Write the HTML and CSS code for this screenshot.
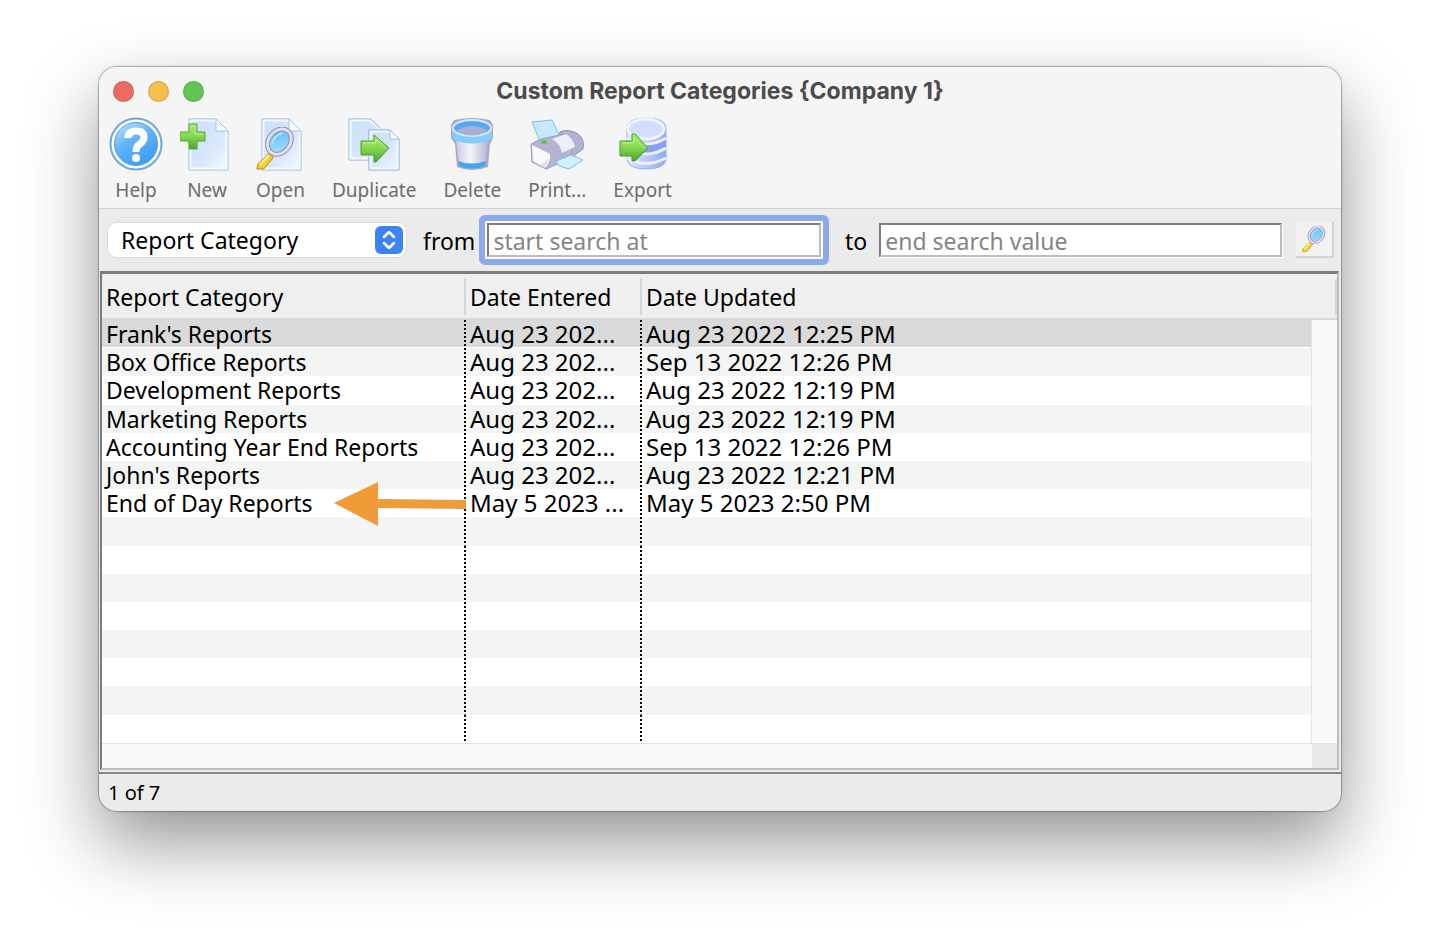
FILE: index.html
```
<!DOCTYPE html>
<html lang="en">
<head>
<meta charset="utf-8">
<title>Custom Report Categories {Company 1}</title>
<link rel="stylesheet" href="styles.css">
</head>
<body>
<svg class="defs" width="0" height="0" aria-hidden="true">
  <defs>
    <linearGradient id="sheet" x1="0" y1="0" x2="1" y2="1"><stop offset="0" stop-color="#c9dff8"/><stop offset=".55" stop-color="#d6e6fb"/><stop offset="1" stop-color="#f4f8ff"/></linearGradient>
    <linearGradient id="green" x1="0" y1="0" x2="0" y2="1"><stop offset="0" stop-color="#a6ee6c"/><stop offset=".5" stop-color="#84d850"/><stop offset="1" stop-color="#4fa52c"/></linearGradient>
    <linearGradient id="lens" x1="0" y1="0" x2="1" y2="1"><stop offset="0" stop-color="#5fb4f6"/><stop offset="1" stop-color="#a9e6ff"/></linearGradient>
    <linearGradient id="ball" x1="0" y1="0" x2=".6" y2="1"><stop offset="0" stop-color="#c4e6fc"/><stop offset=".5" stop-color="#62b2f8"/><stop offset="1" stop-color="#3f9df8"/></linearGradient>
    <linearGradient id="metal" x1="0" y1="0" x2="1" y2="0"><stop offset="0" stop-color="#c9cae2"/><stop offset=".45" stop-color="#f5f5fc"/><stop offset="1" stop-color="#b3b4d2"/></linearGradient>
    <linearGradient id="drum" x1="0" y1="0" x2="1" y2="0"><stop offset="0" stop-color="#dfe6ff"/><stop offset=".5" stop-color="#b9c9ff"/><stop offset="1" stop-color="#8ea6f8"/></linearGradient>
    <symbol id="glass" viewBox="0 0 40 44">
      <path d="M13 27L2 38L1 43H8L18 31Z" fill="#f8cc2c" stroke="#b98322" stroke-width="1"/>
      <path d="M13 29L4 39" stroke="#ffe878" stroke-width="3"/>
      <ellipse cx="24" cy="15" rx="11" ry="14" transform="rotate(38 24 15)" fill="url(#lens)" stroke="#9391ad" stroke-width="5"/>
      <ellipse cx="24" cy="15" rx="11" ry="14" transform="rotate(38 24 15)" fill="none" stroke="#dedff0" stroke-width="3"/>
      <path d="M16 18Q18 9 27 6" fill="none" stroke="#b6e3fd" stroke-width="2"/>
    </symbol>
  </defs>
</svg>
<main class="window">
  <header class="titlebar">
    <div class="lights">
      <button class="light red" aria-label="Close"></button>
      <button class="light amber" aria-label="Minimize"></button>
      <button class="light green" aria-label="Zoom"></button>
    </div>
    <h1 class="title">Custom Report Categories {Company 1}</h1>
  </header>
  <nav class="toolbar">
    <button class="tool">
      <svg class="icon" viewBox="0 0 54 54"><circle cx="27" cy="27" r="25.500" fill="#fff" stroke="#6fa4e2" stroke-width="2"/><circle cx="27" cy="27" r="21.500" fill="url(#ball)" stroke="#4d9cee" stroke-width="1"/><path d="M19 21Q19 14 27 14Q35 14 35 20Q35 24 31 27Q27 29 27 35" fill="none" stroke="#fff" stroke-width="7"/><circle cx="27" cy="41" r="4" fill="#fff"/></svg>
      <span>Help</span>
    </button>
    <button class="tool">
      <svg class="icon" viewBox="0 0 54 54"><path d="M9 2H36L48 14V53H9Z" fill="url(#sheet)" stroke="#8dbbeb" stroke-width="1"/><path d="M10.500 3.500H35L46.500 15V51.500H10.500Z" fill="none" stroke="#f3f8ff" stroke-width="2"/><path d="M36 2V14H48Z" fill="#fff" stroke="#9ac4ee" stroke-width="1"/><path d="M9 7H17V15H25V24H17V32H9V24H0V15H9Z" fill="url(#green)" stroke="#5ba338" stroke-width="1"/><path d="M11 9H15V17H23" fill="none" stroke="#b6f08a" stroke-width="1"/></svg>
      <span>New</span>
    </button>
    <button class="tool">
      <svg class="icon" viewBox="0 0 54 54"><path d="M9 2H36L48 14V53H9Z" fill="url(#sheet)" stroke="#8dbbeb" stroke-width="1"/><path d="M10.500 3.500H35L46.500 15V51.500H10.500Z" fill="none" stroke="#f3f8ff" stroke-width="2"/><path d="M36 2V14H48Z" fill="#fff" stroke="#9ac4ee" stroke-width="1"/><use href="#glass" x="3" y="10" width="39" height="43"/></svg>
      <span>Open</span>
    </button>
    <button class="tool">
      <svg class="icon" viewBox="0 0 54 54"><path d="M2 2H24L33 11V43H2Z" fill="url(#sheet)" stroke="#7fb2ea" stroke-width="1"/><path d="M3.500 3.500H23L32 12V41.500H3.500Z" fill="none" stroke="#f3f8ff" stroke-width="2"/><path d="M22 13H43L52 22V53H22Z" fill="url(#sheet)" stroke="#6fa6e6" stroke-width="1"/><path d="M23.500 14.500H42L50.500 23V51.500H23.500Z" fill="none" stroke="#f3f8ff" stroke-width="2"/><path d="M43 13V22H52Z" fill="#fff" stroke="#8dbbeb" stroke-width="1"/><path d="M14 24H27V18L42 31L29 45H27V38H14Z" fill="url(#green)" stroke="#4f9c2d" stroke-width="1"/><path d="M16 26H29V22L38 31" fill="none" stroke="#b9f08e" stroke-width="1"/></svg>
      <span>Duplicate</span>
    </button>
    <button class="tool">
      <svg class="icon" viewBox="0 0 54 54"><path d="M9 3Q27-1 45 3L48 8V21L45 27L43 50Q27 56 12 50L10 27L6 21V8Z" fill="#a9aacb"/><path d="M11 22H43L41 48Q27 54 14 48Z" fill="url(#metal)"/><path d="M13 44Q27 49 41 44L40 49Q27 54 14 49Z" fill="#40a5f2"/><path d="M7 13Q27 21 47 13V22Q27 31 8 22Z" fill="#83cbfb"/><ellipse cx="27" cy="11" rx="19" ry="8" fill="#4faaf2" stroke="#d7eaff" stroke-width="2"/><path d="M11 14Q27 4 43 14Q27 23 11 14Z" fill="#aaaed0"/></svg>
      <span>Delete</span>
    </button>
    <button class="tool">
      <svg class="icon" viewBox="0 0 54 54"><path d="M30 15Q38 11 48 17Q55 22 53 32L42 40L22 37Z" fill="#b1b2d2" stroke="#8d8fb8" stroke-width="1"/><path d="M2 5L22 3L31 22L11 27Z" fill="#c9e9ff" stroke="#77bdf3" stroke-width="1"/><path d="M1 27L11 22L34 17L44 28L39 42L16 52L2 45Z" fill="#b3b3d3" stroke="#9c9dc2" stroke-width="1"/><path d="M22 22L36 17Q43 21 45 30L32 36Q30 26 22 22Z" fill="#eeeef7"/><path d="M2 28L20 37Q21 44 15 51L3 44Z" fill="#fafafe"/><path d="M20 37L15 51L10 48Q17 45 20 37Z" fill="#dcdcea"/><path d="M26 44L41 38L53 43L39 52L29 49Z" fill="#d0efff" stroke="#7dbbe9" stroke-width="1"/><ellipse cx="14" cy="25" rx="3" ry="2" fill="#5fc63b"/></svg>
      <span>Print...</span>
    </button>
    <button class="tool">
      <svg class="icon" viewBox="0 0 54 54"><path d="M11 12Q11 1 30 1Q50 1 50 12V43Q48 52 30 52Q13 52 11 43Z" fill="url(#drum)" stroke="#9eaef0" stroke-width="1"/><path d="M11 22Q30 34 50 22V32Q30 43 11 32Z" fill="#869ff8"/><path d="M11 21Q30 33 50 21M11 31Q30 43 50 31M11 41Q30 52 50 41" fill="none" stroke="#edf1ff" stroke-width="3"/><ellipse cx="30" cy="12" rx="18" ry="10" fill="#d2ddff" stroke="#f1f4ff" stroke-width="3"/><path d="M4 24H16V17H19L32 31L19 44H16V39H4Z" fill="url(#green)" stroke="#4c9b2a" stroke-width="1"/><path d="M6 26H18V21L28 31" fill="none" stroke="#b5ed8d" stroke-width="1"/></svg>
      <span>Export</span>
    </button>
  </nav>
  <form class="search">
    <div class="picker">
      <select class="select" aria-label="Search field"><option>Report Category</option></select>
      <svg class="stepper" viewBox="0 0 28 28"><rect width="28" height="28" rx="6" fill="#3b84f7"/><path d="M9 11L14 6L19 11M9 17L14 22L19 17" fill="none" stroke="#fff" stroke-width="2.500" stroke-linecap="round" stroke-linejoin="round"/></svg>
    </div>
    <label class="from" for="start">from</label>
    <div class="focus"><input class="field" id="start" type="text" placeholder="start search at"></div>
    <label class="to" for="end">to</label>
    <input class="field last" id="end" type="text" placeholder="end search value">
    <button class="go" type="button" aria-label="Search"><svg class="go-icon" viewBox="0 0 40 44"><use href="#glass"/></svg></button>
  </form>
  <section class="frame">
    <table class="list">
      <colgroup><col class="c1"><col class="c2"><col><col class="c4"></colgroup>
      <thead><tr><th>Report Category</th><th>Date Entered</th><th colspan="2">Date Updated</th></tr></thead>
      <tbody>
        <tr class="selected"><td>Frank's Reports</td><td>Aug 23 202...</td><td>Aug 23 2022 12:25 PM</td><td class="track" rowspan="15"></td></tr>
        <tr><td>Box Office Reports</td><td>Aug 23 202...</td><td>Sep 13 2022 12:26 PM</td></tr>
        <tr><td>Development Reports</td><td>Aug 23 202...</td><td>Aug 23 2022 12:19 PM</td></tr>
        <tr><td>Marketing Reports</td><td>Aug 23 202...</td><td>Aug 23 2022 12:19 PM</td></tr>
        <tr><td>Accounting Year End Reports</td><td>Aug 23 202...</td><td>Sep 13 2022 12:26 PM</td></tr>
        <tr><td>John's Reports</td><td>Aug 23 202...</td><td>Aug 23 2022 12:21 PM</td></tr>
        <tr><td class="marked">End of Day Reports<svg class="arrow" viewBox="0 0 132 44"><path d="M0 21L44 0V17L132 18V27L44 26V44Z" fill="#f09a38"/></svg></td><td>May 5 2023 ...</td><td>May 5 2023 2:50 PM</td></tr>
        <tr><td></td><td></td><td></td></tr>
        <tr><td></td><td></td><td></td></tr>
        <tr><td></td><td></td><td></td></tr>
        <tr><td></td><td></td><td></td></tr>
        <tr><td></td><td></td><td></td></tr>
        <tr><td></td><td></td><td></td></tr>
        <tr><td></td><td></td><td></td></tr>
        <tr><td></td><td></td><td></td></tr>
      </tbody>
    </table>
    <div class="bottom"><div class="track-x"></div><div class="corner"></div></div>
  </section>
  <footer class="status">1 of 7</footer>
</main>
</body>
</html>
```
FILE: styles.css
```
* { box-sizing: border-box; }
body {
  margin: 0;
  min-height: 100vh;
  padding: 67px 99px 0;
  background: #fff;
  color: #000;
  font-family: "Noto Sans", "Open Sans", sans-serif;
  font-size: 23px;
}
button { border: 0; padding: 0; background: none; font: inherit; }
.defs { position: absolute; }
.window {
  overflow: hidden;
  border-radius: 18px;
  background: #ebebeb;
  box-shadow: 0 0 0 1px rgba(0, 0, 0, .22), 0 0 4px rgba(0, 0, 0, .15), 0 32px 72px rgba(0, 0, 0, .42);
}
.titlebar {
  display: grid;
  grid-template-columns: 120px 1fr 120px;
  align-items: center;
  height: 48px;
  background: #f5f5f5;
}
.lights { display: flex; gap: 14px; padding-left: 14px; }
.light { width: 21px; height: 21px; border-radius: 50%; border: 1px solid rgba(0, 0, 0, .12); }
.red { background: #ed6a5f; }
.amber { background: #f5bf4f; }
.green { background: #61c554; }
.title {
  margin: 0;
  text-align: center;
  font: 700 23px/28px Inter, sans-serif;
  color: #4b4b4b;
}
.toolbar {
  display: flex;
  gap: 15px;
  height: 94px;
  padding: 2px 9px 0;
  background: #f5f5f5;
  border-bottom: 1px solid #d0d0d0;
}
.tool {
  display: flex;
  flex-direction: column;
  align-items: center;
  gap: 6px;
  min-width: 56px;
  padding: 0 6px;
  font: 19px/26px "Noto Sans", sans-serif;
  color: #6c6c6c;
}
.icon { width: 54px; height: 54px; margin: 0 -6px; flex: none; }
.search {
  display: flex;
  align-items: center;
  height: 62px;
  padding: 0 7px 0 8px;
}
.picker { position: relative; flex: 0 1 300px; }
.select {
  display: block;
  width: 100%;
  height: 36px;
  padding: 0 13px;
  appearance: none;
  border: 1px solid #dadada;
  border-radius: 9px;
  background: #fff;
  font: inherit;
  color: #000;
}
.stepper { position: absolute; right: 4px; top: 4px; width: 28px; height: 28px; pointer-events: none; }
.from { margin-left: 16px; padding-top: 2px; }
.focus {
  flex: 333 1 0;
  margin-left: 4px;
  border: 6px solid #8ea8ed;
  border-radius: 6px;
  background: #fff;
  padding: 2px;
}
.field {
  display: block;
  width: 100%;
  min-width: 0;
  height: 34px;
  padding: 2px 4px 0;
  border: 2px solid #bdbdbd;
  border-top-color: #7c7c7c;
  border-left-color: #7c7c7c;
  border-radius: 0;
  background: #fff;
  font: inherit;
  outline: 0;
}
.field::placeholder { color: #858585; opacity: 1; }
.to { margin-left: 16px; padding-top: 2px; }
.last { flex: 390 1 0; width: auto; margin-left: 12px; box-shadow: 1px 1px 0 #fff; }
.go {
  display: flex;
  align-items: center;
  justify-content: center;
  width: 38px;
  height: 36px;
  margin-left: 14px;
  background: #f1f1f1;
  border-right: 2px solid #d2d2d2;
  border-bottom: 2px solid #d2d2d2;
}
.go-icon { width: 24px; height: 28px; }
.frame {
  margin: 0 2px 0 1px;
  border: 2px solid #bdbdbd;
  border-top: 3px solid #7c7c7c;
  border-left: 2px solid #7c7c7c;
  background: #fff;
}
.list {
  width: 100%;
  height: 469px;
  table-layout: fixed;
  border-collapse: separate;
  border-spacing: 0;
}
.c1 { width: 364px; }
.c2 { width: 176px; }
.c4 { width: 26px; }
.list th {
  position: relative;
  height: 46px;
  padding: 2px 4px 0;
  border-bottom: 2px solid #d8d8d8;
  background: #efefef;
  text-align: left;
  font-weight: 400;
  line-height: 28px;
}
.list th::after {
  content: "";
  position: absolute;
  right: 0;
  top: 5px;
  bottom: 3px;
  width: 2px;
  background: #d4d4d4;
}
.list td {
  height: 28px;
  padding: 0 4px;
  line-height: 28px;
  white-space: nowrap;
}
.list td:nth-child(-n+2) {
  background: repeating-linear-gradient(#000 0 2px, transparent 2px 4px) right / 2px 100% no-repeat;
}
.list td:nth-child(n+2) { font-size: 24px; }
.list tr:nth-child(even) { background: #f3f5f4; }
.list .selected { background: #dadada; }
.list .selected td { box-shadow: inset 0 -1px #fff; }
.list .selected .track { background: #fafafa; border-left: 1px solid #e4e4e4; box-shadow: none; }
.list .marked { position: relative; }
.arrow { position: absolute; right: 0; top: -7px; width: 132px; height: 44px; }
.bottom { display: flex; height: 25px; border-top: 1px solid #e2e2e2; }
.track-x { flex: 1; background: #fafafa; }
.corner { width: 25px; background: #e8e8e8; }
.status {
  height: 39px;
  margin-top: 2px;
  padding: 3px 9px 0;
  border-top: 2px solid #858585;
  font-size: 20px;
  line-height: 32px;
}
```
